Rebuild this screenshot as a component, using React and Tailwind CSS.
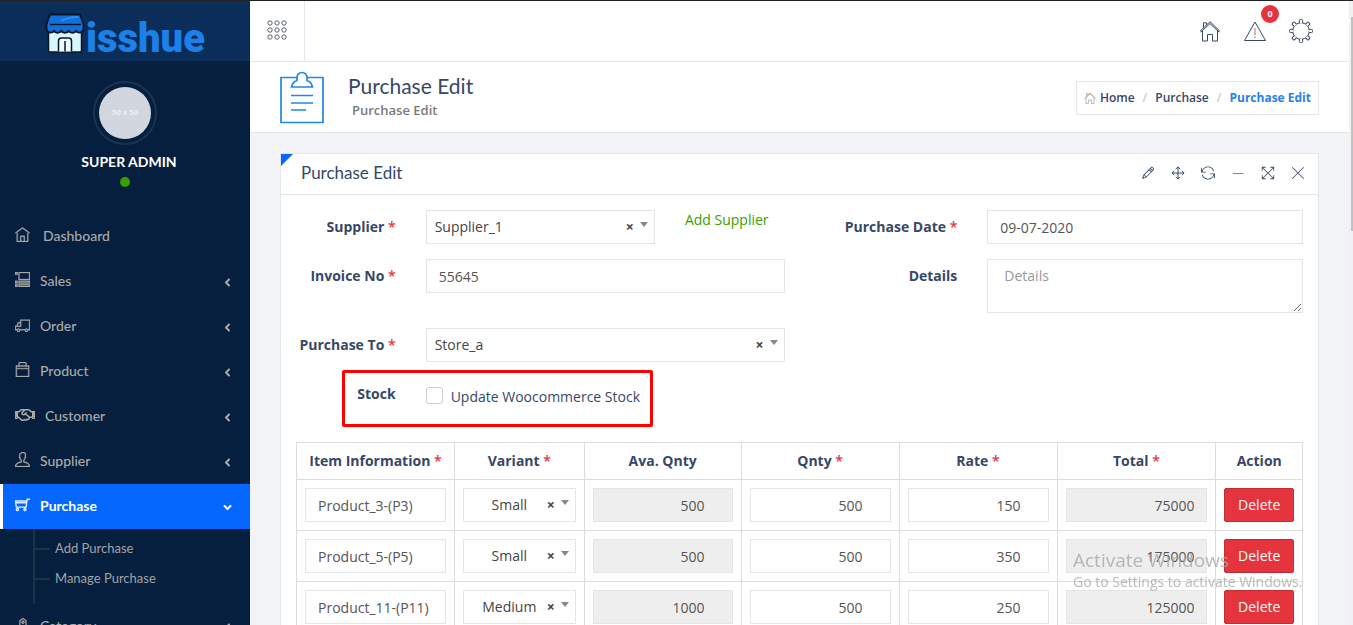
import React from "react";
import {
  TfiHome, TfiLayoutAccordionList, TfiTruck, TfiBag, TfiUser, TfiShoppingCart, TfiTag,
  TfiPencil, TfiReload, TfiFullscreen, TfiClose,
} from "react-icons/tfi";
import { FaRegHandshake, FaAngleLeft, FaAngleDown } from "react-icons/fa";

function MoveIcon({ className }) {
  return (
    <svg className={className} viewBox="0 0 17 17" fill="none" stroke="currentColor" strokeWidth="1.2" aria-hidden="true">
      <path d="M8.500 1.200v14.600M1.200 8.500h14.600M5.800 3.800l2.700-2.700 2.700 2.700M5.800 13.200l2.700 2.700 2.700-2.700M3.800 5.800 1.100 8.500l2.700 2.700M13.200 5.800l2.700 2.700-2.700 2.700" />
    </svg>
  );
}

function MinusIcon({ className }) {
  return (
    <svg className={className} viewBox="0 0 14 14" fill="none" stroke="#7d8494" aria-hidden="true">
      <path d="M2 7.500h10.500" />
    </svg>
  );
}

const MENU = [
  { label: "Dashboard", icon: TfiHome, leaf: true, wide: true },
  { label: "Sales", icon: TfiLayoutAccordionList },
  { label: "Order", icon: TfiTruck },
  { label: "Product", icon: TfiBag },
  { label: "Customer", icon: FaRegHandshake, big: true },
  { label: "Supplier", icon: TfiUser },
  { label: "Purchase", icon: TfiShoppingCart, active: true, children: ["Add Purchase", "Manage Purchase"] },
  { label: "Category", icon: TfiTag },
];

const ROWS = [
  { item: "Product_3-(P3)", variant: "Small", ava: "500", qnty: "500", rate: "150", total: "75000" },
  { item: "Product_5-(P5)", variant: "Small", ava: "500", qnty: "500", rate: "350", total: "175000" },
  { item: "Product_11-(P11)", variant: "Medium", ava: "1000", qnty: "500", rate: "250", total: "125000" },
];

const PANEL_TOOLS = [
  ["Edit title", TfiPencil],
  ["Move", MoveIcon],
  ["Reload", TfiReload],
  ["Minimize", MinusIcon],
  ["Fullscreen", TfiFullscreen],
  ["Close", TfiClose],
];

function ShopLogo() {
  return (
    <svg width="40" height="42" viewBox="0 0 40 42" aria-hidden="true">
      <path d="M3.500 19h33v19.500a1.500 1.500 0 0 1-1.500 1.500H5a1.500 1.500 0 0 1-1.500-1.500z" fill="#d9f6fd" stroke="#0a1626" strokeWidth="1.500" />
      <path d="M13.500 39.500V29q0-3 3-3h7q3 0 3 3v10.500" fill="#eefbff" stroke="#0a1626" strokeWidth="1.500" />
      <path d="M20 29v10.500" stroke="#0a1626" strokeWidth="1.500" />
      <path d="M5 2.500h30l3.500 10v4a4 4 0 0 1-7.400 2.200a4.200 4.200 0 0 1-7.400 0a4.200 4.200 0 0 1-7.400 0a4.200 4.200 0 0 1-7.400 0A4 4 0 0 1 1.500 16.500v-4z" fill="#126fdb" stroke="#0a1626" strokeWidth="1.800" strokeLinejoin="round" />
      <path d="M16 9q7-4 17-4" stroke="#2b8df2" strokeWidth="2" fill="none" />
      <path d="M5 12.500h31" stroke="#0a1626" strokeWidth="1.400" />
    </svg>
  );
}

function HouseOutline({ className }) {
  return (
    <svg className={className} viewBox="0 0 22 22" fill="none" stroke="currentColor" aria-hidden="true">
      <path d="M1 11.300 11 1.700l10 9.600M1.700 12.200 11 3.600l9.300 8.600M3.500 11v10h5v-6.500h5V21h5V11M4.500 8V2.800h3v2.300" />
    </svg>
  );
}

function WarningOutline() {
  return (
    <svg className="size-6" viewBox="0 0 24 24" fill="none" stroke="currentColor" aria-hidden="true">
      <path d="M12 3 1.500 21.500h21z" />
      <path d="M11.300 9.500h1.400l-.3 6.500h-.8zM11.500 17.800h1v1h-1z" strokeWidth=".6" stroke="#b9875a" />
    </svg>
  );
}

function GearOutline() {
  const teeth = [0, 45, 90, 135, 180, 225, 270, 315];
  return (
    <svg className="size-6" viewBox="0 0 24 24" fill="none" stroke="currentColor" aria-hidden="true">
      <circle cx="12" cy="12" r="8.300" />
      {teeth.map((a) => (
        <path key={a} d="M10.400 3.900V1.500q0-1 1-1h1.200q1 0 1 1v2.400" transform={`rotate(${a} 12 12)`} fill="#fff" />
      ))}
    </svg>
  );
}

function DotsOutline() {
  const at = [3, 10, 17];
  return (
    <svg className="size-5" viewBox="0 0 20 20" fill="none" stroke="#5b6270" aria-hidden="true">
      {at.map((y) => at.map((x) => <circle key={`${x}-${y}`} cx={x} cy={y} r="2.200" />))}
    </svg>
  );
}

function ClipboardOutline({ className }) {
  return (
    <svg className={className} width="44" height="54" viewBox="0 0 44 54" fill="none" stroke="#1e88e5" strokeWidth="1.700" aria-hidden="true">
      <path d="M17 6.500H1v45h42v-45H27" />
      <path d="M11.500 16q1-5 5.500-6.500V6.500a5 5 0 0 1 10 0v3q4.500 1.500 5.500 6.500z" />
      <path d="M11 24.500h22M11 32h22M11 39h15" />
    </svg>
  );
}

function Sidebar() {
  return (
    <aside className="flex w-[250px] shrink-0 flex-col overflow-hidden bg-[#071f3e] font-[Lato,sans-serif]">
      <a href="#home" className="flex h-[60px] shrink-0 items-center justify-center gap-px bg-[#0a2d5a] pt-1" aria-label="isshue">
        <ShopLogo />
        <span className="pt-3 font-[Roboto,sans-serif] text-[40px] leading-none font-black text-[#1d80e8]">isshue</span>
      </a>
      <div className="flex shrink-0 flex-col items-center pt-5 pb-[27px]">
        <div className="flex size-16 items-center justify-center rounded-full border-2 border-[#1b3350]">
          <div className="flex size-[52px] items-center justify-center rounded-full bg-[#d2d6df] font-[Roboto,sans-serif] text-[8px] font-bold text-[#eef0f4]">50 x 50</div>
        </div>
        <p className="mt-[7px] pl-2 text-[14px] leading-5 font-bold text-white">SUPER ADMIN</p>
        <span className="mt-[5px] size-[10px] rounded-full bg-[#3aa000]" />
      </div>
      <nav>
        <ul>
          {MENU.map(({ label, icon: Icon, leaf, wide, big, active, children }) => (
            <li key={label}>
              <a
                href={`#${label.toLowerCase()}`}
                className={
                  active
                    ? "flex h-[45px] items-center border-l-3 border-white bg-[#0667ff] pr-4 pb-[2px] pl-3 text-[14px] font-bold text-white"
                    : "flex h-[45px] items-center pr-4 pb-[2px] pl-[15px] text-[14px] font-medium text-[#a9a9a9]"
                }
              >
                <Icon className={big ? "mb-[2px] size-5" : "mb-[2px] size-[15px] stroke-[.4px]"} />
                <span className={wide ? "ml-[13px] grow" : "ml-[10px] grow"}>{label}</span>
                {!leaf && (active ? <FaAngleDown className="mt-1 size-[13px]" /> : <FaAngleLeft className="mt-1 size-[13px]" />)}
              </a>
              {children && (
                <ul className="ml-[33px] h-[75px] border-l-2 border-[#1b3345] pt-[5px]">
                  {children.map((c) => (
                    <li key={c} className="flex h-[30px] items-center">
                      <span className="h-[2px] w-[15px] bg-[#1b3345]" />
                      <a href="#purchase" className="ml-[5px] text-[13px] text-[#a0a3a8]">{c}</a>
                    </li>
                  ))}
                </ul>
              )}
            </li>
          ))}
        </ul>
      </nav>
    </aside>
  );
}

function Topbar() {
  return (
    <header className="flex h-[61px] shrink-0 items-center justify-between border-b border-[#e1e6ef] bg-white text-[#374767]">
      <button type="button" aria-label="Toggle navigation" className="flex h-full w-[55px] items-center justify-center border-r border-[#e1e6ef] pb-[2px]">
        <DotsOutline />
      </button>
      <div className="flex items-center gap-[22px] pr-9">
        <a href="#site" aria-label="Visit site"><HouseOutline className="size-[22px]" /></a>
        <a href="#alerts" aria-label="Alerts" className="relative">
          <WarningOutline />
          <span className="absolute -top-[14px] left-[18px] flex size-[18px] items-center justify-center rounded-full bg-[#e5343d] text-[9px] font-bold text-white">0</span>
        </a>
        <a href="#settings" aria-label="Settings"><GearOutline /></a>
      </div>
    </header>
  );
}

function PageHeading() {
  return (
    <section className="flex h-[71px] shrink-0 items-center border-b border-[#e1e6ef] bg-white px-[30px]">
      <ClipboardOutline className="mt-[2px]" />
      <div className="ml-6 grow pb-[2px]">
        <h1 className="font-[Lato,sans-serif] text-[21px] leading-7 text-[#374767]">Purchase Edit</h1>
        <p className="pl-1 text-[13px] leading-5 font-semibold text-[#7a7a7a]">Purchase Edit</p>
      </div>
      <nav aria-label="Breadcrumb" className="mt-[2px] border border-[#e1e6ef] px-[7px] py-[6px]">
        <ol className="flex items-center text-[12px] leading-5 font-semibold text-[#374767]">
          <li className="flex items-center gap-1"><HouseOutline className="size-3 text-[#8a7f78]" /><a href="#home">Home</a></li>
          <li aria-hidden="true" className="px-2 text-[#ccc]">/</li>
          <li><a href="#purchase">Purchase</a></li>
          <li aria-hidden="true" className="px-2 text-[#ccc]">/</li>
          <li className="font-bold text-[#2a80ea]">Purchase Edit</li>
        </ol>
      </nav>
    </section>
  );
}

const Star = () => <span className="font-semibold text-[#e5343d]">*</span>;

function Label({ htmlFor, required, children }) {
  return (
    <label htmlFor={htmlFor} className="block pt-[7px] text-right leading-5 font-bold">
      {children}{required && <> <Star /></>}
    </label>
  );
}

function ClearableSelect({ id, label, value, centered }) {
  return (
    <div className="relative">
      <select
        id={id}
        aria-label={label}
        defaultValue={value}
        className={
          centered
            ? "block h-[34px] w-full appearance-none border border-[#e4e5e7] bg-white pr-7 pb-[2px] pl-2 text-center text-[#444] [text-align-last:center]"
            : "block h-[34px] w-full appearance-none border border-[#e4e5e7] bg-white pr-10 pb-[2px] pl-2 text-[#444]"
        }
      >
        <option>{value}</option>
      </select>
      <button type="button" aria-label="Clear selection" className="absolute top-[7px] right-[21px] leading-5 font-bold text-[#444]">×</button>
      <span className="pointer-events-none absolute top-3 right-[7px] border-x-4 border-t-5 border-x-transparent border-t-[#888]" />
    </div>
  );
}

const INPUT = "block h-[34px] w-full border border-[#e4e5e7] bg-white px-3 text-[#555]";
const NUMBER = "block h-[34px] w-full border border-[#e4e5e7] bg-white pr-[27px] pl-3 text-right text-[#555]";
const READONLY = "block h-[34px] w-full border border-[#e4e5e7] bg-[#eee] px-3 text-right text-[#555]";
const READONLY_WIDE = "block h-[34px] w-full border border-[#e4e5e7] bg-[#eee] pr-[27px] pl-3 text-right text-[#555]";

function PurchaseForm() {
  return (
    <div className="grid grid-cols-2 gap-y-[15px]">
      <div className="grid grid-cols-12">
        <div className="col-span-3 px-[15px] whitespace-nowrap"><Label htmlFor="supplier" required>Supplier</Label></div>
        <div className="col-span-6 px-[15px]"><ClearableSelect id="supplier" value="Supplier_1" /></div>
        <div className="col-span-3 px-[15px] leading-5"><a href="#add-supplier" className="whitespace-nowrap text-[#37a000]">Add Supplier</a></div>
      </div>
      <div className="grid grid-cols-12">
        <div className="col-span-4 px-[15px]"><Label htmlFor="date" required>Purchase Date</Label></div>
        <div className="col-span-8 px-[15px]"><input id="date" type="text" defaultValue="09-07-2020" className={INPUT} /></div>
      </div>

      <div className="grid grid-cols-12">
        <div className="col-span-3 px-[15px] whitespace-nowrap"><Label htmlFor="invoice" required>Invoice No</Label></div>
        <div className="col-span-9 px-[15px]"><input id="invoice" type="text" defaultValue="55645" className={INPUT} /></div>
      </div>
      <div className="grid grid-cols-12">
        <div className="col-span-4 px-[15px]"><Label htmlFor="details">Details</Label></div>
        <div className="col-span-8 px-[15px]">
          <textarea id="details" placeholder="Details" className="block h-[54px] w-full resize border border-[#e4e5e7] bg-white px-4 py-[6px] leading-5 text-[#555] placeholder:text-[#999]" />
        </div>
      </div>

      <div className="grid grid-cols-12">
        <div className="col-span-3 px-[15px] whitespace-nowrap"><Label htmlFor="store" required>Purchase To</Label></div>
        <div className="col-span-9 px-[15px]"><ClearableSelect id="store" value="Store_a" /></div>
      </div>
      <div />

      <div className="relative grid h-[50px] grid-cols-12 items-start">
        <div className="col-span-3 px-[15px]"><Label htmlFor="stock">Stock</Label></div>
        <div className="col-span-9 flex gap-2 px-[15px] pt-[10px]">
          <input id="stock" type="checkbox" className="size-[17px] appearance-none rounded-[3px] border border-[#ccc] bg-white checked:bg-[#0667ff]" />
          <label htmlFor="stock" className="leading-5 whitespace-nowrap">Update Woocommerce Stock</label>
        </div>
        <div className="pointer-events-none absolute -top-[7px] left-[61px] h-[57px] w-[311px] rounded-[2px] border-3 border-[#fe0000]" />
      </div>
    </div>
  );
}

function ItemsTable() {
  const cell = "border border-[#ddd] p-2";
  const heads = [["Item Information", true], ["Variant", true], ["Ava. Qnty", false], ["Qnty", true], ["Rate", true], ["Total", true], ["Action", false]];
  return (
    <table className="w-full table-fixed border-collapse">
      <colgroup>
        <col className="w-[15.7%]" />
        <col className="w-[12.9%]" />
        <col className="w-[15.6%]" />
        <col className="w-[15.7%]" />
        <col className="w-[15.7%]" />
        <col className="w-[15.8%]" />
        <col className="w-[8.6%]" />
      </colgroup>
      <thead>
        <tr>
          {heads.map(([h, req]) => (
            <th key={h} className="border border-[#ddd] py-2 text-center leading-5 font-bold whitespace-nowrap">{h}{req && <> <Star /></>}</th>
          ))}
        </tr>
      </thead>
      <tbody>
        {ROWS.map((r) => (
          <tr key={r.item}>
            <td className={cell}><input aria-label="Item" type="text" defaultValue={r.item} className={INPUT} /></td>
            <td className={cell}><ClearableSelect label="Variant" value={r.variant} centered /></td>
            <td className={cell}><input aria-label="Available quantity" type="text" readOnly value={r.ava} className={READONLY_WIDE} /></td>
            <td className={cell}><input aria-label="Quantity" type="text" defaultValue={r.qnty} className={NUMBER} /></td>
            <td className={cell}><input aria-label="Rate" type="text" defaultValue={r.rate} className={NUMBER} /></td>
            <td className={cell}><input aria-label="Total" type="text" readOnly value={r.total} className={READONLY} /></td>
            <td className={cell}><button type="button" className="block h-[34px] w-full rounded-[2px] border border-[#bf2d35] bg-[#e5343d] pb-[2px] text-white">Delete</button></td>
          </tr>
        ))}
      </tbody>
    </table>
  );
}

function Panel() {
  return (
    <section className="relative border border-[#e1e6ef] bg-white">
      <span className="absolute top-0 left-0 border-t-12 border-r-12 border-t-[#0667ff] border-r-transparent" />
      <div className="flex h-[41px] items-center justify-between border-b border-[#e1e6ef] pr-[13px] pb-[2px] pl-5 text-[#374767]">
        <h2 className="font-[Lato,sans-serif] text-[17px] leading-6">Purchase Edit</h2>
        <div className="flex items-center gap-4">
          {PANEL_TOOLS.map(([name, Icon]) => (
            <button key={name} type="button" aria-label={name}><Icon className="size-[14px]" /></button>
          ))}
        </div>
      </div>
      <div className="pt-[15px] pb-4">
        <PurchaseForm />
        <div className="px-[15px] pt-[15px]"><ItemsTable /></div>
      </div>
    </section>
  );
}

export default function App() {
  return (
    <div className="flex h-screen overflow-hidden border-t border-[#222] bg-[#f1f3f6] font-['Open_Sans',sans-serif] text-[14px] text-[#374767]">
      <Sidebar />
      <div className="flex min-w-0 grow flex-col">
        <Topbar />
        <PageHeading />
        <main className="min-h-0 grow overflow-hidden px-[30px] pt-5">
          <Panel />
        </main>
      </div>
      <div className="w-1 shrink-0 bg-[#f1f1f1] pt-4 pl-[2px]">
        <div className="h-[214px] bg-[#c1c1c1]" />
      </div>
      <div className="pointer-events-none fixed top-[548px] right-11 w-[236px] text-[#a8a8a8]/80">
        <p className="text-[19px] leading-6">Activate Windows</p>
        <p className="text-[14px] leading-5">Go to Settings to activate Windows.</p>
      </div>
    </div>
  );
}
